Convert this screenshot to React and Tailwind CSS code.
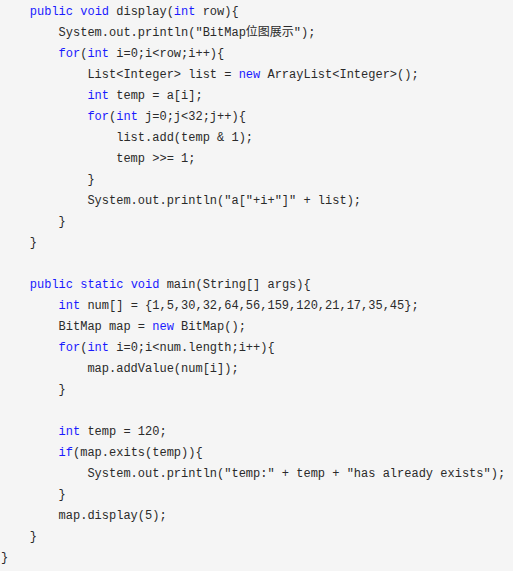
import React from 'react';

const KEYWORDS = ['public', 'static', 'void', 'int', 'for', 'new', 'if'];

const CODE = `    public void display(int row){
        System.out.println("BitMap位图展示");
        for(int i=0;i<row;i++){
            List<Integer> list = new ArrayList<Integer>();
            int temp = a[i];
            for(int j=0;j<32;j++){
                list.add(temp & 1);
                temp >>= 1;
            }
            System.out.println("a["+i+"]" + list);
        }
    }

    public static void main(String[] args){
        int num[] = {1,5,30,32,64,56,159,120,21,17,35,45};
        BitMap map = new BitMap();
        for(int i=0;i<num.length;i++){
            map.addValue(num[i]);
        }

        int temp = 120;
        if(map.exits(temp)){
            System.out.println("temp:" + temp + "has already exists");
        }
        map.display(5);
    }
}`;

// split a line into plain text and keyword pieces
const highlight = (line) => {
  const parts = line.split(/\b(public|static|void|int|for|new|if)\b/);
  return parts.map((p, i) =>
    KEYWORDS.includes(p) ? (
      <span key={i} className="text-[#1a1aff]">{p}</span>
    ) : (
      <span key={i}>{p}</span>
    )
  );
};

const App = () => {
  return (
    <div className="min-h-screen bg-[#f5f5f5]">
      <pre className="m-0 pl-px pt-[2px] text-[12px] leading-[21px] text-[#2a2a2a] font-['Liberation_Mono','Courier_New','Noto_Sans_CJK_SC',monospace]">
        {CODE.split('\n').map((line, i) => (
          <div key={i} className="h-[21px] whitespace-pre">
            {highlight(line)}
          </div>
        ))}
      </pre>
    </div>
  );
};

export default App;
